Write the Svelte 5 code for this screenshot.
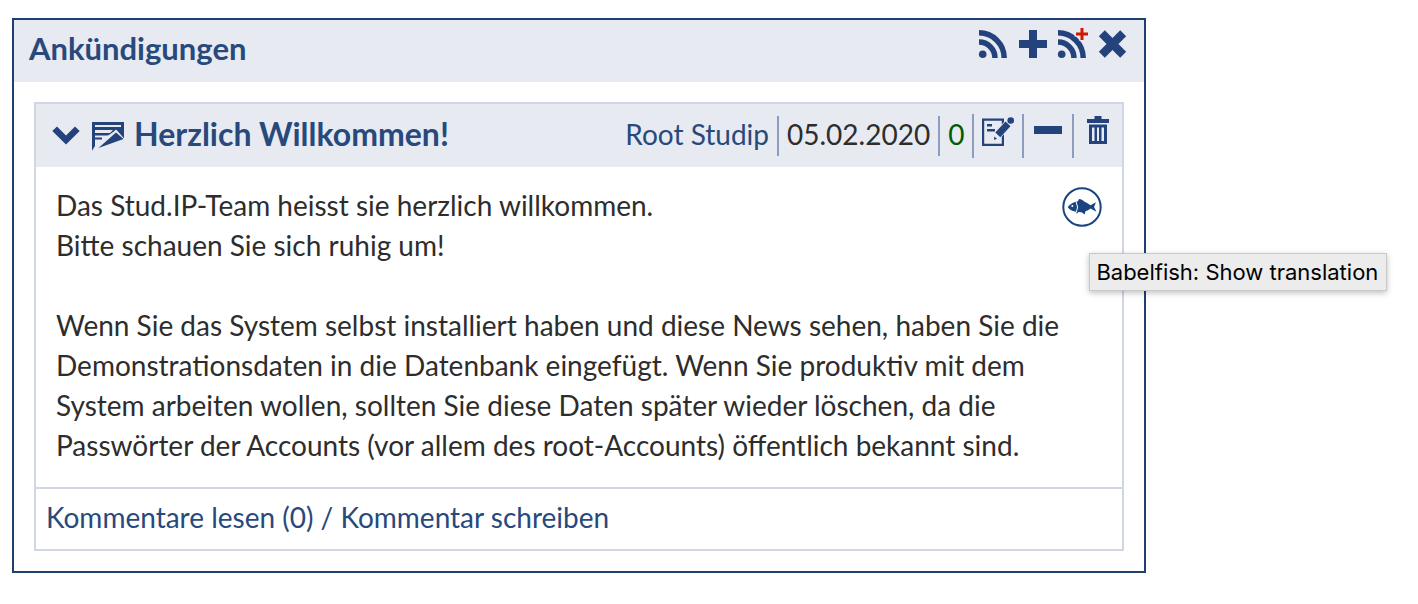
<script lang="ts">
  const blue = '#24437c';
</script>

<section class="panel">
  <header class="panel-head">
    <h1>Ankündigungen</h1>
    <nav class="tools" aria-label="Aktionen">
      <button aria-label="RSS-Feed">
        <svg viewBox="0 0 32 32" fill="none" stroke={blue} stroke-width="5.5">
          <circle cx="5.7" cy="26.3" r="3.8" fill={blue} stroke="none" />
          <path d="M2 14a16 16 0 0 1 16 16M2 4.8A25.2 25.2 0 0 1 27.2 30" />
        </svg>
      </button>
      <button aria-label="Hinzufügen">
        <svg viewBox="0 0 32 32" fill={blue}><path d="M12 2h8v10h10v8H20v10h-8V20H2v-8h10z" /></svg>
      </button>
      <button aria-label="RSS-Feed hinzufügen">
        <svg viewBox="0 0 32 32" fill="none" stroke={blue} stroke-width="5.5">
          <circle cx="4.7" cy="26.3" r="3.8" fill={blue} stroke="none" />
          <path d="M1 14a16 16 0 0 1 16 16M1 4.8A25.2 25.2 0 0 1 26.2 30" />
          <path d="M17.5 6h13.5M25 0v13" stroke="#e7eaf1" stroke-width="5" />
          <path d="M19 6h12M25 0v12" stroke="#d41800" stroke-width="3" />
        </svg>
      </button>
      <button aria-label="Schließen">
        <svg viewBox="0 0 32 32" stroke={blue} stroke-width="8.4"><path d="M4.8 5.3l21.4 21.4M26.2 5.3L4.8 26.7" /></svg>
      </button>
    </nav>
  </header>

  <article>
    <header class="news-head">
      <h2>
        <button aria-label="Einklappen">
          <svg viewBox="0 0 32 32" fill={blue}><path d="M2.3 13L7 8.5l9 9 9-9 4.7 4.500L16 26.500z" /></svg>
        </button>
        <svg class="news-icon" viewBox="0 0 32 32" fill={blue}>
          <path d="M0 4h32v17l-7.5-9L13 19.5 3 28l-3 4.7z" />
          <path d="M3 7h26v2H3zM3 12h18l-3 3H3zM3 17.5h14L3 29z" fill="#e7eaf1" />
          <path d="M3 19.500h7v2H3z" />
          <path d="M5 29.500L24 11.500 33 21.500v2.500l-9-3z" fill="#e7eaf1" />
          <path d="M6.500 30L24 14.500l7.500 6.500z" />
        </svg>
        <a href="#news">Herzlich Willkommen!</a>
      </h2>
      <div class="meta">
        <a href="#root">Root Studip</a>
        <span>05.02.2020</span>
        <span class="visits">0</span>
        <button aria-label="Bearbeiten">
          <svg viewBox="0 0 32 32" fill={blue}>
            <path d="M0 4.5h22V32H0zM2.200 6.700v23h17.600v-23z" fill-rule="evenodd" />
            <path d="M5 10h5v2.500H5zM5 15h8v2.500H5z" />
            <path d="M23.500 7.500l5 4.500-10 11-6.500 3 1-7.500z" fill="#e7eaf1" stroke="#e7eaf1" stroke-width="1.5" />
            <path d="M23.500 7.500l5 4.700-10.200 11-5-4.800zM12.300 22.500l2.700 2.300-3 1.200z" />
            <circle cx="28.7" cy="6.5" r="3.3" />
          </svg>
        </button>
        <button aria-label="Entfernen">
          <svg viewBox="0 0 32 32" fill={blue}><path d="M2 12h28v8H2z" /></svg>
        </button>
        <button aria-label="Löschen">
          <svg viewBox="0 0 32 32" fill={blue}>
            <path d="M12.500 2h7v3H27v4H5V5h7.500z" />
            <path d="M7 10.500h18V30H7zM10 13.500V27h2.500V13.500zM15 13.500V27h2V13.500zM19.500 13.500V27H22V13.500z" fill-rule="evenodd" />
          </svg>
        </button>
      </div>
    </header>

    <div class="content">
      <div class="fish">
        <button aria-label="Babelfish" aria-describedby="fish-tip">
          <svg viewBox="0 0 40 40">
            <circle cx="20" cy="20" r="18.7" fill="#fff" stroke="#1a4480" stroke-width="2" />
            <path d="M5.700 20C8 17 11.500 14.700 16 14.200l1-2.200c2.300.3 4.300 1.300 5.500 2.800 2.200.8 4 2.200 6 3.500l5.500-3-2 4.700 2.500 4.800-6-3.300c-1.600 1.300-3.300 2.200-5 2.800l-1 3.200-2.800-2.300c-1 0-2.400 0-3.200-.2l-1.700 1.700-1.300-2.300C10 24.500 7.300 22.500 5.700 20z" fill="#1a4480" />
            <path d="M14 14.500q3 5.500.3 11" fill="none" stroke="#fff" stroke-width="1" />
            <circle cx="10.3" cy="19" r="1" fill="#fff" />
          </svg>
        </button>
        <div class="tip" role="tooltip" id="fish-tip">Babelfish: Show translation</div>
      </div>
      <p>Das Stud.IP-Team heisst sie herzlich willkommen.<br />Bitte schauen Sie sich ruhig um!</p>
      <p>Wenn Sie das System selbst installiert haben und diese News sehen, haben Sie die Demonstrationsdaten in die Datenbank eingefügt. Wenn Sie produktiv mit dem System arbeiten wollen, sollten Sie diese Daten später wieder löschen, da die Passwörter der Accounts (vor allem des root-Accounts) öffentlich bekannt sind.</p>
    </div>

    <footer><a href="#comments">Kommentare lesen (0) / Kommentar schreiben</a></footer>
  </article>
</section>

<style>
  .panel {
    box-sizing: border-box;
    width: 80%;
    margin: 18px 12px;
    border: 2px solid #1f3f73;
    font: 28px/40px Lato, sans-serif;
    color: #2d2d2d;
  }
  a { color: #28497c; text-decoration: none; }
  button {
    display: flex;
    align-items: flex-start;
    padding: 0;
    border: 0;
    background: none;
    cursor: pointer;
  }
  svg { display: block; width: 32px; height: 32px; overflow: visible; }
  .panel-head {
    display: flex;
    justify-content: space-between;
    padding: 8px 15px 14px;
    background: #e7eaf1;
  }
  h1, h2 { margin: 0; line-height: 40px; font-weight: 700; color: #28497c; }
  h1 { font-size: 31px; }
  h2 { font-size: 32px; }
  .tools { display: flex; gap: 8px; }
  article { margin: 20px; border: 2px solid #d0d6e2; }
  .news-head {
    display: flex;
    justify-content: space-between;
    align-items: flex-start;
    padding: 10px 0 9px 14px;
    background: #e7eaf1;
  }
  h2 { display: flex; align-items: center; }
  .news-icon { margin: 0 10px; }
  .meta { display: flex; align-items: center; }
  .meta > * { padding: 0 8px 4px; line-height: 36px; border-left: 2px solid #8c9dc0; }
  .meta > :first-child { border-left: 0; }
  .meta button { height: 44px; }
  .visits { color: #005c00; }
  .content { padding: 18px 20px 22px; }
  p { margin: 0 0 40px; }
  p:last-child { margin: 0; }
  .fish { position: relative; float: right; margin-top: 2px; }
  .fish svg { width: 40px; height: 40px; }
  .tip {
    position: absolute;
    top: 66px;
    left: 27px;
    padding: 0 8px 0 6px;
    border: 1px solid #c8c8c8;
    background: #ececec;
    box-shadow: 0 2px 6px rgba(0, 0, 0, 0.25);
    font: 22px/36px Inter, sans-serif;
    color: #000;
    white-space: nowrap;
  }
  footer { padding: 8px 10px 12px; border-top: 2px solid #d0d6e2; }
</style>
